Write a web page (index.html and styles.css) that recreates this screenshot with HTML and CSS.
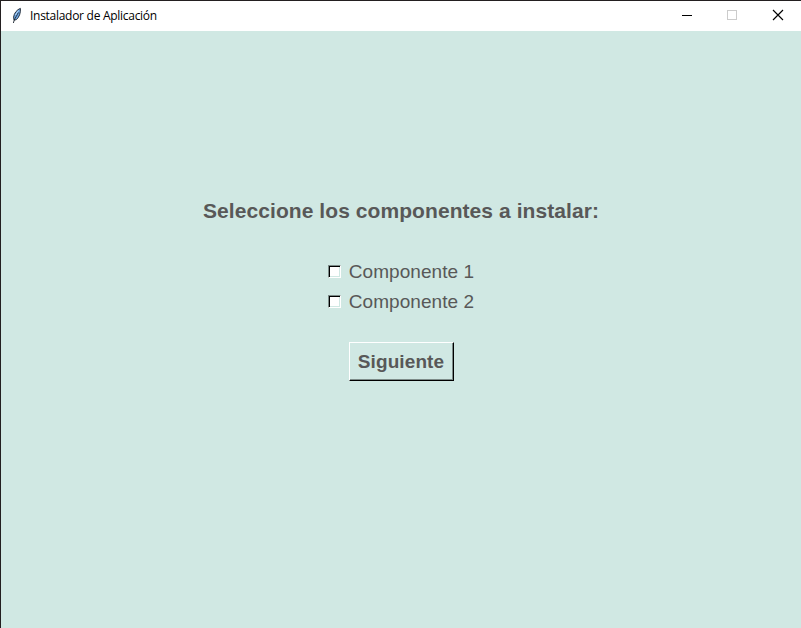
FILE: index.html
```html
<!DOCTYPE html>
<html lang="es">
<head>
<meta charset="utf-8">
<title>Instalador de Aplicación</title>
<link rel="stylesheet" href="styles.css">
</head>
<body>
<div class="window">
  <header class="titlebar">
    <svg class="feather" width="12" height="18" viewBox="0 0 12 18">
      <path d="M9.4 1.4C6 2.4 3 6.4 2.6 10L3 13.2L5.4 12.6C8.2 10.2 9.8 6 9.4 1.4Z" fill="#6ea6e4" stroke="#17202b" stroke-width="0.9"/>
      <path d="M7.4 5.5C6 8.5 4 11 3.1 13.5L2.4 16" fill="none" stroke="#18222c" stroke-width="0.9"/>
      <path d="M7.4 3.6L4.4 8" stroke="#b6d6f6" stroke-width="1"/>
    </svg>
    <span class="title">Instalador de Aplicación</span>
    <div class="controls">
      <svg width="46" height="30" viewBox="0 0 46 30"><path d="M18 14.5H28" stroke="#000" shape-rendering="crispEdges"/></svg>
      <svg width="46" height="30" viewBox="0 0 46 30"><rect x="17.5" y="9.5" width="9" height="9" fill="none" stroke="#ccc" shape-rendering="crispEdges"/></svg>
      <svg width="46" height="30" viewBox="0 0 46 30"><path d="M17 9L27 19M27 9L17 19" stroke="#000" stroke-width="1.15"/></svg>
    </div>
  </header>
  <main class="content">
    <h1 class="heading">Seleccione los componentes a instalar:</h1>
    <div class="options">
      <label class="option"><span class="box"></span><span class="label">Componente 1</span></label>
      <label class="option"><span class="box"></span><span class="label">Componente 2</span></label>
    </div>
    <button class="next">Siguiente</button>
  </main>
</div>
</body>
</html>
```

FILE: styles.css
```css
* { box-sizing: border-box; }

body {
  margin: 0;
  font-family: "Liberation Sans", Arial, sans-serif;
  color: #585858;
}

.window {
  width: 801px;
  height: 628px;
  overflow: hidden;
  display: flex;
  flex-direction: column;
  background: #d0e8e3;
  border-top: 1px solid #231f20;
  border-left: 1px solid #231f20;
}

.titlebar {
  display: flex;
  align-items: center;
  height: 30px;
  flex: none;
  background: #fff;
  color: #000;
}

.feather { margin: 0 7px 0 10px; }

.title {
  font: 12px/16px "Open Sans", "Noto Sans", sans-serif;
  letter-spacing: -0.28px;
}

.controls { display: flex; margin-left: auto; margin-right: -1px; }

.content {
  display: flex;
  flex-direction: column;
  align-items: center;
  padding-top: 168px;
}

.heading {
  margin: 0;
  font-size: 21px;
  line-height: 24px;
  font-weight: bold;
  letter-spacing: 0.07px;
  white-space: nowrap;
}

.options { margin-top: 33px; }

.option {
  display: flex;
  align-items: center;
  height: 30px;
  font-size: 19px;
  line-height: 22px;
}

.label {
  padding-top: 2px;
  letter-spacing: 0.07px;
}

.box {
  width: 13px;
  height: 13px;
  margin-right: 8px;
  background: #fff;
  border: 1px solid;
  border-color: #7c8b88 #fff #fff #7c8b88;
  box-shadow: inset 1px 1px #000, inset -1px -1px #d0e8e3;
}

.next {
  width: 105px;
  height: 39px;
  margin-top: 26px;
  padding: 0;
  background: #d0e8e3;
  border: 1px solid;
  border-color: #fff #000 #000 #fff;
  box-shadow: inset -1px -1px #7c8b88;
  font: bold 19px/22px "Liberation Sans", Arial, sans-serif;
  letter-spacing: 0.1px;
  color: #585858;
}
```
